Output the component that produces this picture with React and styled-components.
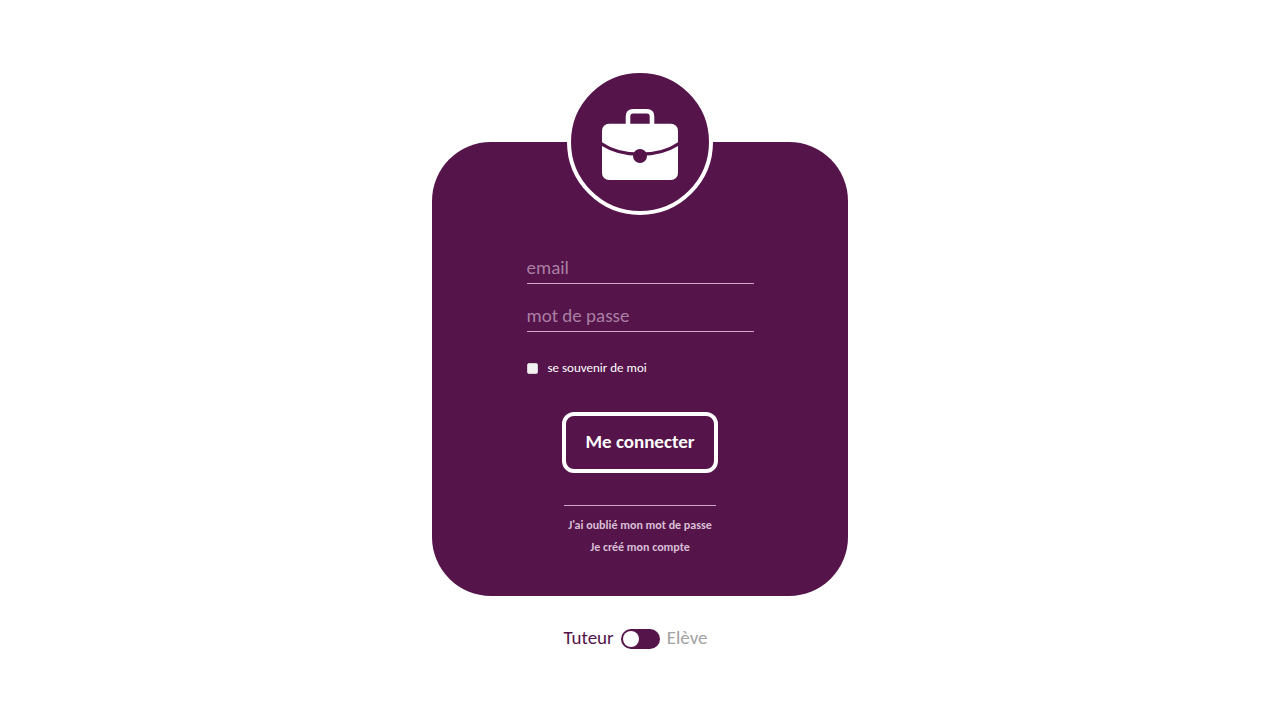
import React, { useState } from "react";
import styled, { createGlobalStyle } from "styled-components";

const plum = "#55144a";
const rose = "#d0a6ca";

const GlobalStyle = createGlobalStyle`
  *, *::before, *::after { box-sizing: border-box; }
  body {
    margin: 0;
    background: #fff;
    font-family: Carlito, Calibri, Lato, "Liberation Sans", sans-serif;
  }
  input, button { font-family: inherit; }
`;

const Page = styled.main`
  display: flex;
  flex-direction: column;
  align-items: center;
  gap: 32px;
  min-height: 100vh;
  padding: 142px 16px 32px;
`;

const Card = styled.form`
  display: flex;
  flex-direction: column;
  align-items: center;
  width: 100%;
  max-width: 416px;
  padding: 0 24px 38px;
  border-radius: 59px;
  background: ${plum};
`;

const Badge = styled.div`
  display: grid;
  place-items: center;
  width: 146px;
  height: 146px;
  margin-top: -73px;
  border: 4px solid #fff;
  border-radius: 50%;
  background: ${plum};
`;

const Fields = styled.div`
  display: flex;
  flex-direction: column;
  gap: 16px;
  width: 100%;
  max-width: 227px;
  margin-top: 37px;
`;

const Field = styled.input`
  width: 100%;
  height: 32px;
  padding: 0;
  border: 0;
  border-bottom: 1px solid ${rose};
  border-radius: 0;
  outline: 0;
  background: transparent;
  color: #fff;
  font-size: 19px;

  &::placeholder { color: #aa7fa4; opacity: 1; }
`;

const Remember = styled.label`
  display: flex;
  align-items: center;
  gap: 10px;
  margin-top: 12px;
  color: #fff;
  font-size: 13px;
  line-height: 16px;
`;

const Tick = styled.input`
  appearance: none;
  width: 11px;
  height: 11px;
  margin: 0;
  border: 1px solid #d9cdd8;
  border-radius: 2px;
  background: #f2f2f2;

  &:checked { background: ${rose}; }
`;

const Submit = styled.button`
  width: 156px;
  height: 61px;
  margin-top: 36px;
  padding: 0 0 2px;
  border: 4px solid #fff;
  border-radius: 12px;
  background: transparent;
  color: #fff;
  font-size: 19px;
  font-weight: 700;
  cursor: pointer;
`;

const Links = styled.nav`
  display: flex;
  flex-direction: column;
  align-items: center;
  width: 152px;
  margin-top: 32px;
  padding-top: 8px;
  border-top: 1px solid ${rose};
`;

const TextLink = styled.a`
  color: #d8bfd5;
  font-size: 12px;
  font-weight: 700;
  line-height: 22px;
  text-decoration: none;
  white-space: nowrap;
`;

const RoleSwitch = styled.label`
  display: flex;
  align-items: center;
  gap: 7px;
  padding-right: 9px;
  font-size: 19px;
  line-height: 20px;
  cursor: pointer;
`;

const Role = styled.span`
  padding-bottom: 2px;
  color: ${(p) => (p.$active ? plum : "#a3a3a3")};
`;

const Toggle = styled.input`
  appearance: none;
  display: flex;
  width: 39px;
  height: 20px;
  margin: 0;
  padding: 2px;
  border-radius: 10px;
  background: ${plum};
  cursor: pointer;

  &::before {
    content: "";
    width: 16px;
    height: 16px;
    border-radius: 50%;
    background: #fff;
  }
  &:checked { justify-content: flex-end; }
`;

function Briefcase() {
  return (
    <svg width="76" height="76" viewBox="0 0 76 76" aria-hidden="true">
      <path
        d="M26 20V12.5Q26 7.3 31.2 7.3H44.8Q50 7.3 50 12.5V20"
        fill="none"
        stroke="#fff"
        strokeWidth="4.6"
      />
      <rect y="19.7" width="76" height="56.3" rx="7" fill="#fff" />
      <path
        d="M0 38.2Q15 48.6 38 48.6T76 38.2V42Q61 51.8 38 51.8T0 42Z"
        fill={plum}
      />
      <circle cx="38" cy="52" r="7" fill={plum} />
    </svg>
  );
}

export default function App() {
  const [student, setStudent] = useState(false);
  return (
    <>
      <GlobalStyle />
      <Page>
        <Card onSubmit={(e) => e.preventDefault()}>
          <Badge>
            <Briefcase />
          </Badge>
          <Fields>
            <Field type="email" placeholder="email" aria-label="email" />
            <Field type="password" placeholder="mot de passe" aria-label="mot de passe" />
            <Remember>
              <Tick type="checkbox" />
              se souvenir de moi
            </Remember>
          </Fields>
          <Submit type="submit">Me connecter</Submit>
          <Links>
            <TextLink href="#reset">J'ai oublié mon mot de passe</TextLink>
            <TextLink href="#signup">Je créé mon compte</TextLink>
          </Links>
        </Card>
        <RoleSwitch>
          <Role $active={!student}>Tuteur</Role>
          <Toggle
            type="checkbox"
            role="switch"
            checked={student}
            onChange={(e) => setStudent(e.target.checked)}
          />
          <Role $active={student}>Elève</Role>
        </RoleSwitch>
      </Page>
    </>
  );
}
